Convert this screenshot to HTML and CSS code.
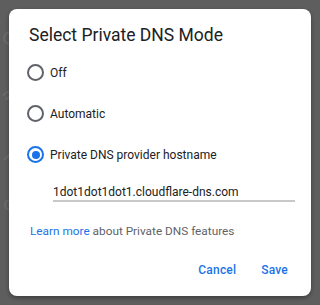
FILE: index.html
```html
<!DOCTYPE html>
<html>
<head>
<meta charset="utf-8">
<link rel="stylesheet" href="styles.css">
</head>
<body>
<div class="backdrop">
  <svg class="bg-icons" width="12" height="305" viewBox="0 0 12 305">
    <circle cx="10" cy="38" r="6" fill="none" stroke="#6a6a6a" stroke-width="2"/>
    <path d="M3 96 a9 9 0 0 1 10 -4 M6 100 a5 5 0 0 1 6 -3" fill="none" stroke="#6a6a6a" stroke-width="2"/>
    <path d="M4 160 l5 -5 l4 4" fill="none" stroke="#6a6a6a" stroke-width="2"/>
    <circle cx="10" cy="205" r="5" fill="none" stroke="#6a6a6a" stroke-width="2"/>
    <circle cx="10" cy="205" r="1.5" fill="#6a6a6a"/>
  </svg>
  <div class="dialog">
    <h1 class="title">Select Private DNS Mode</h1>
    <div class="options">
      <label class="option"><span class="radio"></span><span class="label">Off</span></label>
      <label class="option"><span class="radio"></span><span class="label">Automatic</span></label>
      <label class="option"><span class="radio checked"></span><span class="label">Private DNS provider hostname</span></label>
    </div>
    <div class="field">1dot1dot1dot1.cloudflare-dns.com</div>
    <p class="info"><span class="link">Learn more</span> about Private DNS features</p>
    <div class="actions">
      <span class="btn">Cancel</span>
      <span class="btn">Save</span>
    </div>
  </div>
</div>
</body>
</html>
```
FILE: styles.css
```css
html, body {
  margin: 0;
  padding: 0;
}
body {
  width: 320px;
  height: 305px;
  background: #5e5e5e;
  font-family: Roboto, "Liberation Sans", sans-serif;
  overflow: hidden;
}
.backdrop {
  position: relative;
  width: 320px;
  height: 305px;
  padding: 9px 0 0 9px;
  box-sizing: border-box;
}
.bg-icons {
  position: absolute;
  left: 0;
  top: 0;
}
.dialog {
  position: relative;
  width: 302px;
  height: 287px;
  background: #fff;
  border-radius: 8px;
  box-shadow: 0 2px 4px rgba(0,0,0,0.35);
  box-sizing: border-box;
  padding: 14px 0 0 0;
  display: flex;
  flex-direction: column;
}
.title {
  margin: 0 0 0 20px;
  font-size: 17.5px;
  line-height: 24px;
  font-weight: 400;
  color: #202124;
  height: 24px;
}
.options {
  margin-top: 5px;
  display: flex;
  flex-direction: column;
}
.option {
  display: flex;
  align-items: center;
  height: 41px;
  padding-left: 18px;
}
.radio {
  width: 13px;
  height: 13px;
  border: 2px solid #5f6368;
  border-radius: 50%;
  position: relative;
  flex: none;
}
.radio.checked {
  border-color: #1a73e8;
}
.radio.checked::after {
  content: "";
  position: absolute;
  left: 2.5px;
  top: 2.5px;
  width: 8px;
  height: 8px;
  border-radius: 50%;
  background: #1a73e8;
}
.label {
  margin-left: 6px;
  font-size: 12px;
  color: #202124;
}
.field {
  margin: 9px 0 0 44px;
  width: 242px;
  font-size: 12px;
  line-height: 16px;
  color: #202124;
  border-bottom: 2px solid #c8c8c8;
}
.info {
  margin: 21px 0 0 21px;
  font-size: 11.8px;
  line-height: 16px;
  color: #5f6368;
}
.link {
  color: #1a73e8;
}
.actions {
  margin-top: 23px;
  display: flex;
  justify-content: flex-end;
  gap: 25px;
  padding-right: 23px;
}
.btn {
  font-size: 12px;
  line-height: 16px;
  font-weight: 500;
  color: #1a73e8;
  letter-spacing: 0.2px;
}
```
